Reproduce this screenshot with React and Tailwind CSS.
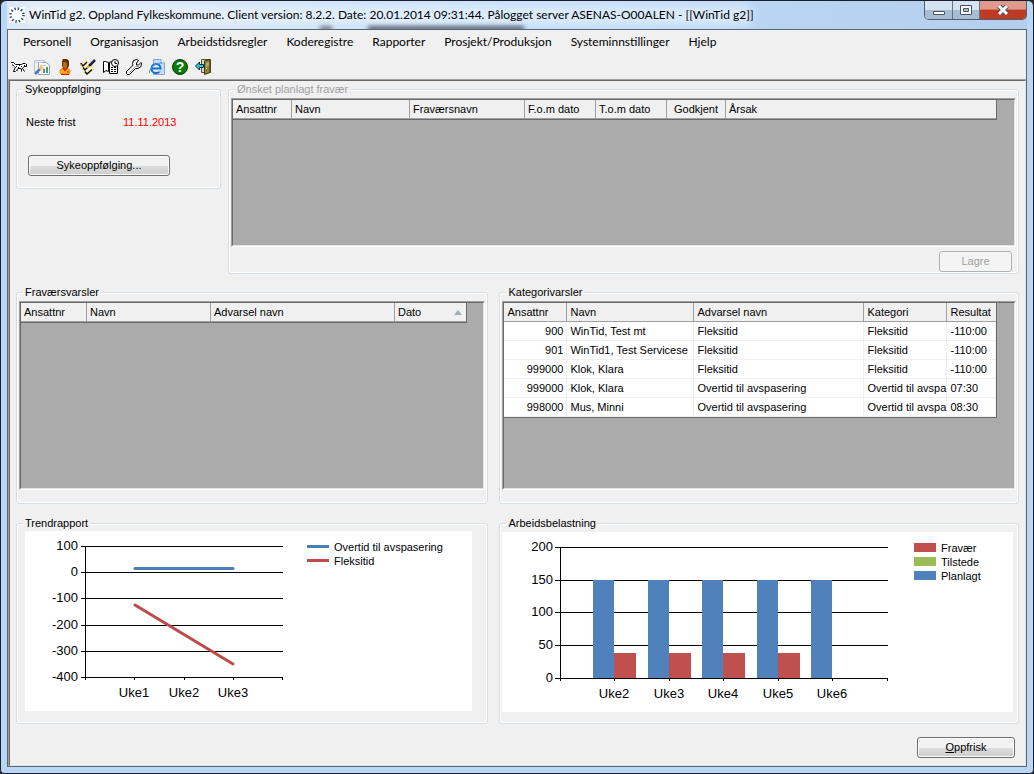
import clsx from 'clsx'

const menuItems = [
  'Personell',
  'Organisasjon',
  'Arbeidstidsregler',
  'Koderegistre',
  'Rapporter',
  'Prosjekt/Produksjon',
  'Systeminnstillinger',
  'Hjelp'
]

const absenceColumns = [
  { label: 'Ansattnr', width: 'w-[59px]' },
  { label: 'Navn', width: 'w-[118px]' },
  { label: 'Fraværsnavn', width: 'w-[115px]' },
  { label: 'F.o.m dato', width: 'w-[71px]' },
  { label: 'T.o.m dato', width: 'w-[71px]' },
  { label: 'Godkjent', width: 'w-[59px]', center: true },
  { label: 'Årsak', width: 'w-[270px]' }
]

const warningColumns = [
  { label: 'Ansattnr', width: 'w-[66px]' },
  { label: 'Navn', width: 'w-[124px]' },
  { label: 'Advarsel navn', width: 'w-[184px]' },
  { label: 'Dato', width: 'w-[71px]', sorted: true }
]

const categoryColumns = [
  { label: 'Ansattnr', width: 'w-[63px]', numeric: true },
  { label: 'Navn', width: 'w-[127px]' },
  { label: 'Advarsel navn', width: 'w-[170px]' },
  { label: 'Kategori', width: 'w-[83px]' },
  { label: 'Resultat', width: 'w-[49px]' }
]

const categoryRows = [
  ['900', 'WinTid, Test mt', 'Fleksitid', 'Fleksitid', '-110:00'],
  ['901', 'WinTid1, Test Servicese', 'Fleksitid', 'Fleksitid', '-110:00'],
  ['999000', 'Klok, Klara', 'Fleksitid', 'Fleksitid', '-110:00'],
  ['999000', 'Klok, Klara', 'Overtid til avspasering', 'Overtid til avspa', '07:30'],
  ['998000', 'Mus, Minni', 'Overtid til avspasering', 'Overtid til avspa', '08:30']
]

const Icon = ({ children }) => (
  <svg width="16" height="16" viewBox="0 0 16 16" aria-hidden="true">
    {children}
  </svg>
)

const toolbarItems = [
  {
    label: 'Katt',
    icon: (
      <Icon>
        <path d="M0 4H3L4 6H11L12 5H14L16 6V8H13L12 9L13 12H11L10 10H7L5 12H3L4 8L2 6H0Z" fill="#fff" />
        <path d="M0 3.500H2.500L4.500 5.500H10.500L12 4.500H14.500M15.500 5V7.500H13L11.500 9.500L13.500 12.500M10.500 9.500V12.500M10 9.500H7L5.500 11.500H6.500M4.500 8L2.500 12.500H4.500M1 5.500L3.500 7.500" fill="none" stroke="#000" />
        <path d="M5 7h1v1h-1zM7 8h1v1h-1zM8 6h1v1h-1zM10 7h1v1h-1zM13 6h1v1h-1z" fill="#000" />
      </Icon>
    )
  },
  {
    label: 'Rapport',
    icon: (
      <Icon>
        <path d="M0.500 1.500H10.500V12.500H0.500Z" fill="#eef3f9" stroke="#b3c1d3" />
        <path d="M4.500 3.500H12L15.500 6V15.500H4.500Z" fill="#fff" stroke="#8fa3be" />
        <path d="M6 6.500h6M2 3.500h6" stroke="#b9c8da" />
        <path d="M12 8h2v6h-2z" fill="#4d9a6c" />
        <path d="M9 10h2v4h-2z" fill="#4f86cc" />
        <path d="M1 15L6 10" stroke="#3c7ac6" strokeWidth="2.500" />
        <path d="M7 5L8 8L11 9L8 10L7 13L6 10L3 9L6 8Z" fill="#ffc24a" />
      </Icon>
    )
  },
  {
    label: 'Person',
    icon: (
      <Icon>
        <path d="M6 0H10L12 2V7L11 9H6L5 7V2Z" fill="#5a3204" />
        <path d="M6 3H9L10 5V8L8 10L6 8Z" fill="#b96d10" />
        <path d="M3 11L6 9H10L13 11V14L12 15H4L3 14Z" fill="#ffb000" stroke="#b65a00" strokeWidth="0.500" />
        <path d="M5 9H11L8 13Z" fill="#e02c14" />
        <path d="M4 15.500H12M10 13H12" stroke="#c3200d" />
      </Icon>
    )
  },
  {
    label: 'Godkjenn',
    icon: (
      <Icon>
        <path d="M0 5L8 2L14 11L5 15Z" fill="#fffbd0" stroke="#e7d63c" strokeDasharray="1 1" />
        <path d="M1 4.500L3 7L7 3M3 8.500L5 11L9 7M5 12.500L7 15L12 10.500" fill="none" stroke="#111" strokeWidth="1.500" />
        <path d="M0 4L2 6" stroke="#d3341d" />
        <path d="M15 1L9 7" stroke="#111" strokeWidth="2.500" />
        <path d="M14.500 1L10 5.500" stroke="#3a45d5" />
        <path d="M9 7L7.500 9" stroke="#f0c000" strokeWidth="2" />
      </Icon>
    )
  },
  {
    label: 'Timeliste',
    icon: (
      <Icon>
        <path d="M0.500 2.500H2.500L5.500 3.500V12.500L3 11.500L0.500 13.500Z" fill="#fff" stroke="#000" />
        <path d="M6.500 4V14.500H14.500V7" fill="#fff" stroke="#000" />
        <path d="M8 8.500h5M8 10.500h5M8 12.500h5" stroke="#000" strokeDasharray="2 1" />
        <circle cx="12" cy="4" r="3.500" fill="#fff" stroke="#000" />
        <path d="M12 2V4.500H14" fill="none" stroke="#000" />
        <path d="M6 3.500L8.500 2.500" stroke="#000" />
      </Icon>
    )
  },
  {
    label: 'Verktøy',
    icon: (
      <Icon>
        <path d="M15 3.500L12.500 6H10.500V4L12.500 1.500L10.500 0.500L7.500 1.500L6.500 4.500L7 6.500L0.500 12.500V14.500L1.500 15.500H3.500L9.500 9.500H12L15 7.500L15.500 4.500Z" fill="#fff" stroke="#000" />
        <path d="M3 14L9.500 7.500L13 7.500" fill="none" stroke="#999" />
      </Icon>
    )
  },
  {
    label: 'Internett',
    icon: (
      <Icon>
        <path d="M4.500 0.500H12L15.500 4V15.500H4.500Z" fill="#c9dcf5" stroke="#8aa6d0" />
        <path d="M12 0.500V4H15.500" fill="#fff" stroke="#8aa6d0" />
        <circle cx="7" cy="9.500" r="4.500" fill="#d6eeff" stroke="#1b6fc8" strokeWidth="2" />
        <path d="M3 9.500H11" stroke="#1b6fc8" strokeWidth="2" />
        <path d="M9 11.500H12.500" stroke="#c9dcf5" strokeWidth="2" />
        <path d="M0.500 14C0 9 6 4 13 4" fill="none" stroke="#3a9bea" />
      </Icon>
    )
  },
  {
    label: 'Hjelp',
    icon: (
      <Icon>
        <circle cx="8" cy="8" r="7.500" fill="#087b08" stroke="#003c00" />
        <text x="8" y="13" textAnchor="middle" fill="#fff" className="font-['Liberation_Sans'] text-[14px] font-bold">?</text>
      </Icon>
    )
  },
  {
    label: 'Avslutt',
    icon: (
      <Icon>
        <path d="M6.500 0.500H15.500V13.500H6.500Z" fill="#d8d8c8" stroke="#55542a" />
        <path d="M9.500 2L15 0.500V13.500L9.500 15.500Z" fill="#8a8438" stroke="#3c3a08" />
        <path d="M11 4L14 3V7L11 8Z" fill="#b0ab60" />
        <path d="M11 9h1v1h-1z" fill="#fff" />
        <path d="M0.500 7L4.500 3V5.500H8.500V8.500H4.500V11Z" fill="#2fc4d4" stroke="#00343c" />
      </Icon>
    )
  }
]

const TitleBar = () => (
  <header className="relative flex h-7 items-center overflow-hidden bg-linear-to-r from-[#dbe8f6] via-[#bedbfa] to-[#b3cfed] pl-[2px]">
    <div className="absolute top-[25px] left-[361px] h-1 w-[156px] bg-[#26303c] blur-[2px]" />
    <div className="absolute top-[25px] left-[313px] h-1 w-3 bg-[#465260] blur-[2px]" />
    <div className="absolute top-1 left-4 h-5 w-[730px] rounded-full bg-white/50 blur-[6px]" />
    <svg className="relative mr-1 shrink-0" width="16" height="16" viewBox="0 0 16 16" aria-hidden="true">
      <path d="M0 0h16v16H0z" fill="#fff" />
      <circle cx="8" cy="8" r="6.500" fill="none" stroke="#1d4a78" strokeWidth="2.500" strokeDasharray="1.400 2" />
    </svg>
    <h1 className="relative grow truncate font-['Lato',sans-serif] text-[12px] leading-5">
      WinTid g2. Oppland Fylkeskommune. Client version: 8.2.2. Date: 20.01.2014 09:31:44. Pålogget server ASENAS-O00ALEN - [[WinTid g2]]
    </h1>
    <div className="relative flex h-[19px] shrink-0 self-start overflow-hidden rounded-b-[5px] border border-t-0 border-[#4f5e6e]">
      <button aria-label="Minimer" className="flex w-7 items-center justify-center border-r border-[#64758a] bg-linear-to-b from-[#d5e2ef] from-50% to-[#a9bdd2] to-50%">
        <svg width="12" height="12" viewBox="0 0 12 12">
          <path d="M0.500 7.500H11.500V10.500H0.500Z" fill="#fff" stroke="#4c5566" />
        </svg>
      </button>
      <button aria-label="Maksimer" className="flex w-[27px] items-center justify-center border-r border-[#64758a] bg-linear-to-b from-[#d5e2ef] from-50% to-[#a9bdd2] to-50%">
        <svg width="12" height="10" viewBox="0 0 12 10">
          <path d="M0.500 0.500H11.500V9.500H0.500Z" fill="#fff" stroke="#4c5566" />
          <path d="M3.500 3.500H8.500V6.500H3.500Z" fill="#a9bdd2" stroke="#4c5566" />
        </svg>
      </button>
      <button aria-label="Lukk" className="flex w-[46px] items-center justify-center bg-linear-to-b from-[#de9a8c] from-45% to-[#bf3a22] to-50%">
        <svg width="14" height="10" viewBox="0 0 14 10">
          <path d="M3 1L11 9M11 1L3 9" stroke="#4c4a5c" strokeWidth="5" />
          <path d="M3 1L11 9M11 1L3 9" stroke="#fff" strokeWidth="3" />
        </svg>
      </button>
    </div>
  </header>
)

const GroupBox = ({ title, disabled, className, children }) => (
  <fieldset className={clsx('min-w-0 rounded-[3px] border border-[#d5dfe5] shadow-[inset_0_0_0_1px_#fff]', className)}>
    <legend className={clsx('ml-[6px] bg-[#f0f0f0] px-[2px] leading-[13px]', disabled && 'text-[#a0a0a0]')}>{title}</legend>
    {children}
  </fieldset>
)

const PushButton = ({ className, disabled, children }) => (
  <button
    disabled={disabled}
    className={clsx(
      'h-[21px] rounded-[3px] border',
      disabled
        ? 'border-[#adb2b5] bg-[#f4f4f4] text-[#a0a0a0]'
        : 'border-[#707070] bg-linear-to-b from-[#f2f2f2] from-50% via-[#dddddd] via-50% to-[#cfcfcf] shadow-[inset_0_0_0_1px_#fcfcfc]',
      className
    )}
  >
    {children}
  </button>
)

const DataGrid = ({ label, columns, rows = [], className }) => (
  <div className={clsx('border border-t-[#a0a0a0] border-r-white border-b-white border-l-[#a0a0a0]', className)}>
    <div className="h-full overflow-hidden border border-t-[#696969] border-r-[#e3e3e3] border-b-[#e3e3e3] border-l-[#696969] bg-[#ababab]">
      <table aria-label={label} className="w-px table-fixed border-separate border-spacing-0 border-r border-b border-[#696969] bg-white">
        <thead>
          <tr className="h-[19px]">
            {columns.map((column) => (
              <th
                key={column.label}
                className={clsx(
                  'border-r border-b border-[#a0a0a0] bg-[#f0f0f0] px-[3px] py-0 leading-[17px] font-normal whitespace-nowrap last:border-r-0',
                  column.center ? 'text-center' : 'text-left',
                  column.width
                )}
              >
                {column.sorted ? (
                  <span className="flex items-center justify-between pr-px">
                    {column.label}
                    <svg width="8" height="5" viewBox="0 0 8 5" aria-hidden="true">
                      <path d="M0 5L4 0L8 5Z" fill="#9db0ba" />
                    </svg>
                  </span>
                ) : (
                  column.label
                )}
              </th>
            ))}
          </tr>
        </thead>
        <tbody>
          {rows.map((row, rowIndex) => (
            <tr key={rowIndex} className="h-[19px]">
              {row.map((value, index) => (
                <td
                  key={index}
                  className={clsx(
                    'border-r border-b border-[#f0f0f0] py-0 pl-[3px] leading-[17px] whitespace-nowrap',
                    columns[index].numeric ? 'pr-[3px] text-right' : 'pr-0'
                  )}
                >
                  {value}
                </td>
              ))}
            </tr>
          ))}
        </tbody>
      </table>
    </div>
  </div>
)

const trendTicks = [
  { value: '100', y: 15 },
  { value: '0', y: 41 },
  { value: '-100', y: 67 },
  { value: '-200', y: 94 },
  { value: '-300', y: 120 },
  { value: '-400', y: 146 }
]

const TrendChart = () => (
  <svg className="block" width="440" height="180" viewBox="0 0 440 180" role="img" aria-label="Trendrapport">
    <g fill="#000" shapeRendering="crispEdges">
      {trendTicks.map((tick) => (
        <rect key={tick.value} x="56" y={tick.y} width="202" height="1" />
      ))}
      <rect x="60" y="15" width="1" height="134" />
      {[109, 159, 208, 257].map((x) => (
        <rect key={x} x={x} y="146" width="1" height="3" />
      ))}
    </g>
    <g className="text-[13px]">
      {trendTicks.map((tick) => (
        <text key={tick.value} x="53" y={tick.y + 4} textAnchor="end">{tick.value}</text>
      ))}
      <text x="109" y="166" textAnchor="middle">Uke1</text>
      <text x="159" y="166" textAnchor="middle">Uke2</text>
      <text x="208" y="166" textAnchor="middle">Uke3</text>
    </g>
    <g fill="none" strokeWidth="3" strokeLinecap="round">
      <path d="M110 37.500H208" stroke="#4a7ebb" />
      <path d="M110 74L208 133" stroke="#be4b48" />
    </g>
    <path d="M282 15.500H304" stroke="#4a7ebb" strokeWidth="3" />
    <path d="M282 29.500H304" stroke="#be4b48" strokeWidth="3" />
    <g className="text-[11px]">
      <text x="309" y="20">Overtid til avspasering</text>
      <text x="309" y="34">Fleksitid</text>
    </g>
  </svg>
)

const loadTicks = [
  { value: '200', y: 15 },
  { value: '150', y: 48 },
  { value: '100', y: 80 },
  { value: '50', y: 113 },
  { value: '0', y: 146 }
]

const loadWeeks = [
  { label: 'Uke2', x: 112, absent: true },
  { label: 'Uke3', x: 167, absent: true },
  { label: 'Uke4', x: 221, absent: true },
  { label: 'Uke5', x: 276, absent: true },
  { label: 'Uke6', x: 330, absent: false }
]

const loadLegend = [
  { label: 'Fravær', color: '#c0504d', y: 11 },
  { label: 'Tilstede', color: '#9bbb59', y: 25 },
  { label: 'Planlagt', color: '#4f81bd', y: 39 }
]

const LoadChart = () => (
  <svg className="block" width="500" height="180" viewBox="0 0 500 180" role="img" aria-label="Arbeidsbelastning">
    <g shapeRendering="crispEdges">
      {loadTicks.map((tick) => (
        <rect key={tick.value} x="53" y={tick.y} width="333" height="1" />
      ))}
      <rect x="58" y="15" width="1" height="134" />
      {loadWeeks.map((week) => (
        <g key={week.label}>
          <rect x={week.x - 21} y="48" width="21" height="98" fill="#4f81bd" />
          {week.absent && <rect x={week.x} y="121" width="22" height="25" fill="#c0504d" />}
          <rect x={week.x} y="146" width="1" height="3" />
        </g>
      ))}
      <rect x="385" y="146" width="1" height="3" />
      {loadLegend.map((item) => (
        <rect key={item.label} x="412" y={item.y} width="22" height="9" fill={item.color} />
      ))}
    </g>
    <g className="text-[13px]">
      {loadTicks.map((tick) => (
        <text key={tick.value} x="51" y={tick.y + 4} textAnchor="end">{tick.value}</text>
      ))}
      {loadWeeks.map((week) => (
        <text key={week.label} x={week.x} y="166" textAnchor="middle">{week.label}</text>
      ))}
    </g>
    <g className="text-[11px]">
      {loadLegend.map((item) => (
        <text key={item.label} x="439" y={item.y + 9}>{item.label}</text>
      ))}
    </g>
  </svg>
)

const Dashboard = () => (
  <main className="flex grow flex-col border-t border-l border-[#a0a0a0]">
    <div className="flex grow flex-col border border-t-[#696969] border-r-[#e3e3e3] border-b-[#e3e3e3] border-l-[#696969] px-[6px] pt-[2px] pb-[7px]">
      <div className="grid grid-cols-[205px_1fr] items-start gap-[7px]">
        <GroupBox title="Sykeoppfølging" className="h-[106px]">
          <dl className="flex px-[9px] pt-5 leading-[13px]">
            <dt className="w-[97px]">Neste frist</dt>
            <dd className="text-[#f00]">11.11.2013</dd>
          </dl>
          <PushButton className="mt-[26px] ml-[11px] w-[142px]">Sykeoppfølging...</PushButton>
        </GroupBox>
        <GroupBox title="Ønsket planlagt fravær" disabled>
          <div className="flex flex-col px-[2px] pt-[2px] pb-px">
            <DataGrid label="Ønsket planlagt fravær" columns={absenceColumns} className="h-[149px]" />
            <PushButton className="mt-1 mr-1 w-[73px] self-end" disabled>Lagre</PushButton>
          </div>
        </GroupBox>
      </div>

      <div className="mt-3 grid grid-cols-[472fr_519fr] gap-x-[11px] gap-y-[13px]">
        <GroupBox title="Fraværsvarsler">
          <div className="px-[2px] pt-[2px] pb-[13px]">
            <DataGrid label="Fraværsvarsler" columns={warningColumns} className="h-[189px]" />
          </div>
        </GroupBox>
        <GroupBox title="Kategorivarsler">
          <div className="px-[2px] pt-[2px] pb-[13px]">
            <DataGrid label="Kategorivarsler" columns={categoryColumns} rows={categoryRows} className="h-[189px]" />
          </div>
        </GroupBox>
        <GroupBox title="Trendrapport">
          <div className="mt-px mr-[15px] mb-3 ml-2 overflow-hidden bg-white">
            <TrendChart />
          </div>
        </GroupBox>
        <GroupBox title="Arbeidsbelastning">
          <div className="mt-[2px] mr-[5px] mb-[11px] ml-[2px] overflow-hidden bg-white">
            <LoadChart />
          </div>
        </GroupBox>
      </div>

      <footer className="mt-[13px] flex justify-end pr-1">
        <PushButton className="w-[98px]"><u>O</u>ppfrisk</PushButton>
      </footer>
    </div>
  </main>
)

const App = () => (
  <div className="bg-[#26262b]">
    <div className="flex min-h-screen flex-col rounded-t-[6px] rounded-b-[4px] border border-[#1c1f2b] bg-[#b9d6f4] px-[6px] pb-[6px] font-['Liberation_Sans',Arial,sans-serif] text-[11px] text-black">
      <TitleBar />
      <div className="flex grow flex-col border border-[#566878] bg-[#f0f0f0]">
        <nav className="flex h-6 items-center gap-[19px] pl-[15px] font-['Lato',sans-serif] text-[12px]">
          {menuItems.map((item) => (
            <button key={item}>{item}</button>
          ))}
        </nav>
        <div role="toolbar" aria-label="Verktøylinje" className="flex h-[25px] items-center gap-[7px] pl-[3px]">
          {toolbarItems.map((item) => (
            <button key={item.label} aria-label={item.label}>{item.icon}</button>
          ))}
        </div>
        <Dashboard />
      </div>
    </div>
  </div>
)

export default App
